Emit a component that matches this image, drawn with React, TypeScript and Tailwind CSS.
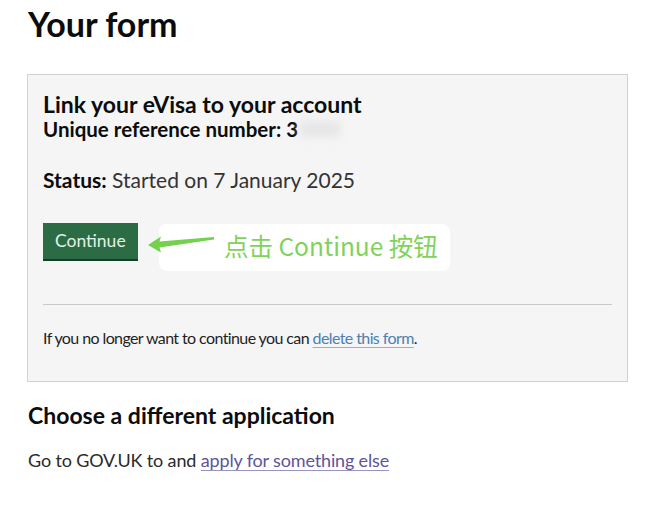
import React from 'react';

// Green hand-drawn arrow used in the screenshot annotation
const Arrow = () => (
  <svg width="72" height="22" viewBox="0 0 72 22" className="block">
    <polygon points="1,12 14,3.5 12.5,8.5 67,4 67,6.5 12.5,14.5 14,19.5" fill="#74d14e" />
  </svg>
);

export default function App() {
  return (
    <div className="w-[650px] h-[507px] bg-white pl-[28px] pr-[22px] pt-[4px] text-[#0b0c0c]" style={{ fontFamily: 'Lato, "Noto Sans", sans-serif' }}>
      <h1 className="text-[34px] leading-[40px] font-bold">Your form</h1>

      {/* Application card */}
      <div className="mt-[30px] -ml-[1px] w-[601px] border border-[#d2d2d2] bg-[#f5f5f5] px-[15px] pt-[16px] pb-[33px]">
        <h2 className="text-[23px] leading-[27px] font-bold">Link your eVisa to your account</h2>
        <p className="text-[20.5px] leading-[22px] font-bold flex items-center">
          Unique reference number: 3
          <span className="inline-block ml-[2px] w-[40px] h-[16px] bg-[#e6e6e6] blur-[4px]" />
        </p>

        <p className="mt-[28px] text-[21px] leading-[24px] text-[#333333]">
          <span className="font-bold text-[#0b0c0c]">Status:</span> Started on 7 January 2025
        </p>

        <div className="relative mt-[31px] h-[36px]">
          <button className="h-[36px] px-[12px] bg-[#2b6c45] text-[#e3f0e6] text-[17.5px] leading-[20px] shadow-[0_2px_0_#173d26]">
            Continue
          </button>

          {/* Screenshot annotation */}
          <div className="absolute left-[116px] top-[1px] w-[291px] h-[47px] rounded-[8px] bg-white flex items-center pl-[65px] pb-[4px]">
            <span className="text-[24.5px] leading-[30px] text-[#7fd35a]" style={{ fontFamily: '"Noto Sans CJK SC", sans-serif' }}>
              点击 Continue 按钮
            </span>
          </div>
          <div className="absolute left-[104px] top-[10px]">
            <Arrow />
          </div>
        </div>

        <div className="mt-[45px] border-t border-[#c9c9c9]" />

        <p className="mt-[23px] text-[16px] leading-[20px] text-[#1f1f1f] tracking-[-0.6px]">
          If you no longer want to continue you can{' '}
          <a href="#" className="text-[#4c7fb3] underline decoration-[#8fb0d0] underline-offset-[3px]" onClick={e => e.preventDefault()}>
            delete this form
          </a>
          .
        </p>
      </div>

      <h2 className="mt-[20px] text-[23px] leading-[26px] font-bold">Choose a different application</h2>
      <p className="mt-[21px] text-[18px] leading-[22px] text-[#2a2a2a] tracking-[-0.15px]">
        Go to GOV.UK to and{' '}
        <a href="#" className="text-[#5e5499] underline decoration-[#9a93c0] underline-offset-[3px]" onClick={e => e.preventDefault()}>
          apply for something else
        </a>
      </p>
    </div>
  );
}
